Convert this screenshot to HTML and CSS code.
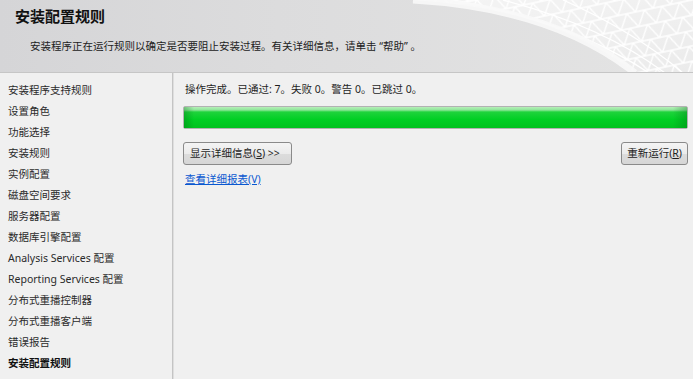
FILE: index.html
```html
<!DOCTYPE html>
<html lang="zh-CN">
<head>
    <meta charset="UTF-8">
    <meta name="viewport" content="width=device-width, initial-scale=1.0">
    <title>安装配置规则</title>
    <link rel="stylesheet" href="styles.css">
</head>
<body>

    <div class="header">
        <svg class="mesh" viewBox="0 0 290 73" width="290" height="73">
            <defs>
                <clipPath id="meshClip">
                    <path d="M10 0 Q150 8 232 73 L290 73 L290 0 Z"/>
                </clipPath>
                <pattern id="tri" width="18" height="15" patternUnits="userSpaceOnUse" patternTransform="rotate(-12)">
                    <path d="M0 0 L18 0 M0 15 L18 15 M0 0 L9 15 L18 0 M-9 15 L0 0 M18 0 L27 15" stroke="#ffffff" stroke-width="1.4" fill="none"/>
                </pattern>
                <linearGradient id="fade" x1="0" y1="0" x2="1" y2="1">
                    <stop offset="0" stop-color="#ffffff" stop-opacity="0.5"/>
                    <stop offset="1" stop-color="#ffffff" stop-opacity="0"/>
                </linearGradient>
            </defs>
            <g clip-path="url(#meshClip)">
                <rect x="0" y="0" width="290" height="73" fill="#ebebeb"/>
                <rect x="0" y="0" width="290" height="73" fill="url(#tri)"/>
                <path d="M50 0 Q170 22 246 73" stroke="#ffffff" stroke-width="1.3" fill="none"/>
                <path d="M100 0 Q200 26 262 73" stroke="#ffffff" stroke-width="1.3" fill="none"/>
                <path d="M160 0 Q232 32 280 73" stroke="#ffffff" stroke-width="1.3" fill="none"/>
                <rect x="0" y="0" width="290" height="73" fill="url(#fade)"/>
            </g>
            <path d="M10 0 Q150 8 232 73" stroke="#f8f8f8" stroke-width="7" fill="none" opacity="0.9"/>
        </svg>
        <h1 class="title">安装配置规则</h1>
        <p class="subtitle">安装程序正在运行规则以确定是否要阻止安装过程。有关详细信息，请单击 “帮助” 。</p>
    </div>

    <div class="body">
        <ul class="steps">
            <li>安装程序支持规则</li>
            <li>设置角色</li>
            <li>功能选择</li>
            <li>安装规则</li>
            <li>实例配置</li>
            <li>磁盘空间要求</li>
            <li>服务器配置</li>
            <li>数据库引擎配置</li>
            <li>Analysis Services 配置</li>
            <li>Reporting Services 配置</li>
            <li>分布式重播控制器</li>
            <li>分布式重播客户端</li>
            <li>错误报告</li>
            <li class="current">安装配置规则</li>
        </ul>

        <div class="main">
            <div class="status">操作完成。已通过: 7。失败 0。警告 0。已跳过 0。</div>
            <div class="progress"><div class="progress-fill"></div></div>
            <div class="actions">
                <button class="btn">显示详细信息(<u>S</u>) &gt;&gt;</button>
                <button class="btn">重新运行(<u>R</u>)</button>
            </div>
            <a class="report" href="#">查看详细报表(V)</a>
        </div>
    </div>

</body>
</html>
```

FILE: styles.css
```css
body {
    margin: 0;
    width: 693px;
    height: 379px;
    overflow: hidden;
    background-color: #f0f0f0;
    font-family: "Noto Sans", "Noto Sans CJK SC", sans-serif;
    font-size: 10.5px;
    color: #1e1e1e;
}

.header {
    position: relative;
    height: 72px;
    border-bottom: 1px solid #c6c6c6;
    background: linear-gradient(to right, #d5d5d7 0%, #dcdcdd 40%, #e4e4e4 100%);
    overflow: hidden;
}

.mesh {
    position: absolute;
    top: 0;
    right: 0;
}

.title {
    position: relative;
    margin: 0;
    padding: 6px 0 0 15px;
    font-size: 15px;
    line-height: 20px;
    font-weight: bold;
    color: #111;
}

.subtitle {
    position: relative;
    margin: 12px 0 0 30px;
    line-height: 16px;
    color: #222;
}

.body {
    display: flex;
    height: 306px;
}

.steps {
    list-style: none;
    margin: 0;
    padding: 7px 0 0 8px;
    width: 164px;
    border-right: 1px solid #c4c4c4;
    box-shadow: 1px 0 0 #dedede;
}

.steps li {
    line-height: 21px;
    height: 21px;
    color: #2a2a2a;
    white-space: nowrap;
}

.steps .current {
    font-weight: bold;
    color: #111;
}

.main {
    flex: 1;
    padding: 8px 5px 0 10px;
}

.status {
    line-height: 16px;
    padding-left: 2px;
}

.progress {
    margin-top: 9px;
    height: 21px;
    border: 1px solid #b2b2b2;
    border-radius: 2px;
    background: #e6e6e6;
}

.progress-fill {
    height: 100%;
    background:
        linear-gradient(to right, rgba(0, 110, 20, 0.35) 0, rgba(0, 110, 20, 0) 10px, rgba(0, 110, 20, 0) calc(100% - 14px), rgba(0, 110, 20, 0.35) 100%),
        linear-gradient(to bottom, #b6efb8 0, #8fe69a 3px, #1fd33c 5px, #00cf24 60%, #00c21f 100%);
}

.actions {
    display: flex;
    justify-content: space-between;
    margin-top: 13px;
}

.btn {
    height: 23px;
    padding: 0 5px;
    border: 1px solid #8a8a8a;
    border-radius: 3px;
    background: linear-gradient(to bottom, #f4f4f4 0%, #ebebeb 50%, #dcdcdc 51%, #d6d6d6 100%);
    font-family: "Noto Sans", "Noto Sans CJK SC", sans-serif;
    font-size: 10.5px;
    color: #1e1e1e;
    line-height: 21px;
}

.actions .btn:first-child {
    width: 109px;
    text-align: left;
    padding-left: 6px;
}

.report {
    display: inline-block;
    margin: 6px 0 0 2px;
    line-height: 16px;
    color: #0a58d0;
    text-decoration: underline;
}
```
